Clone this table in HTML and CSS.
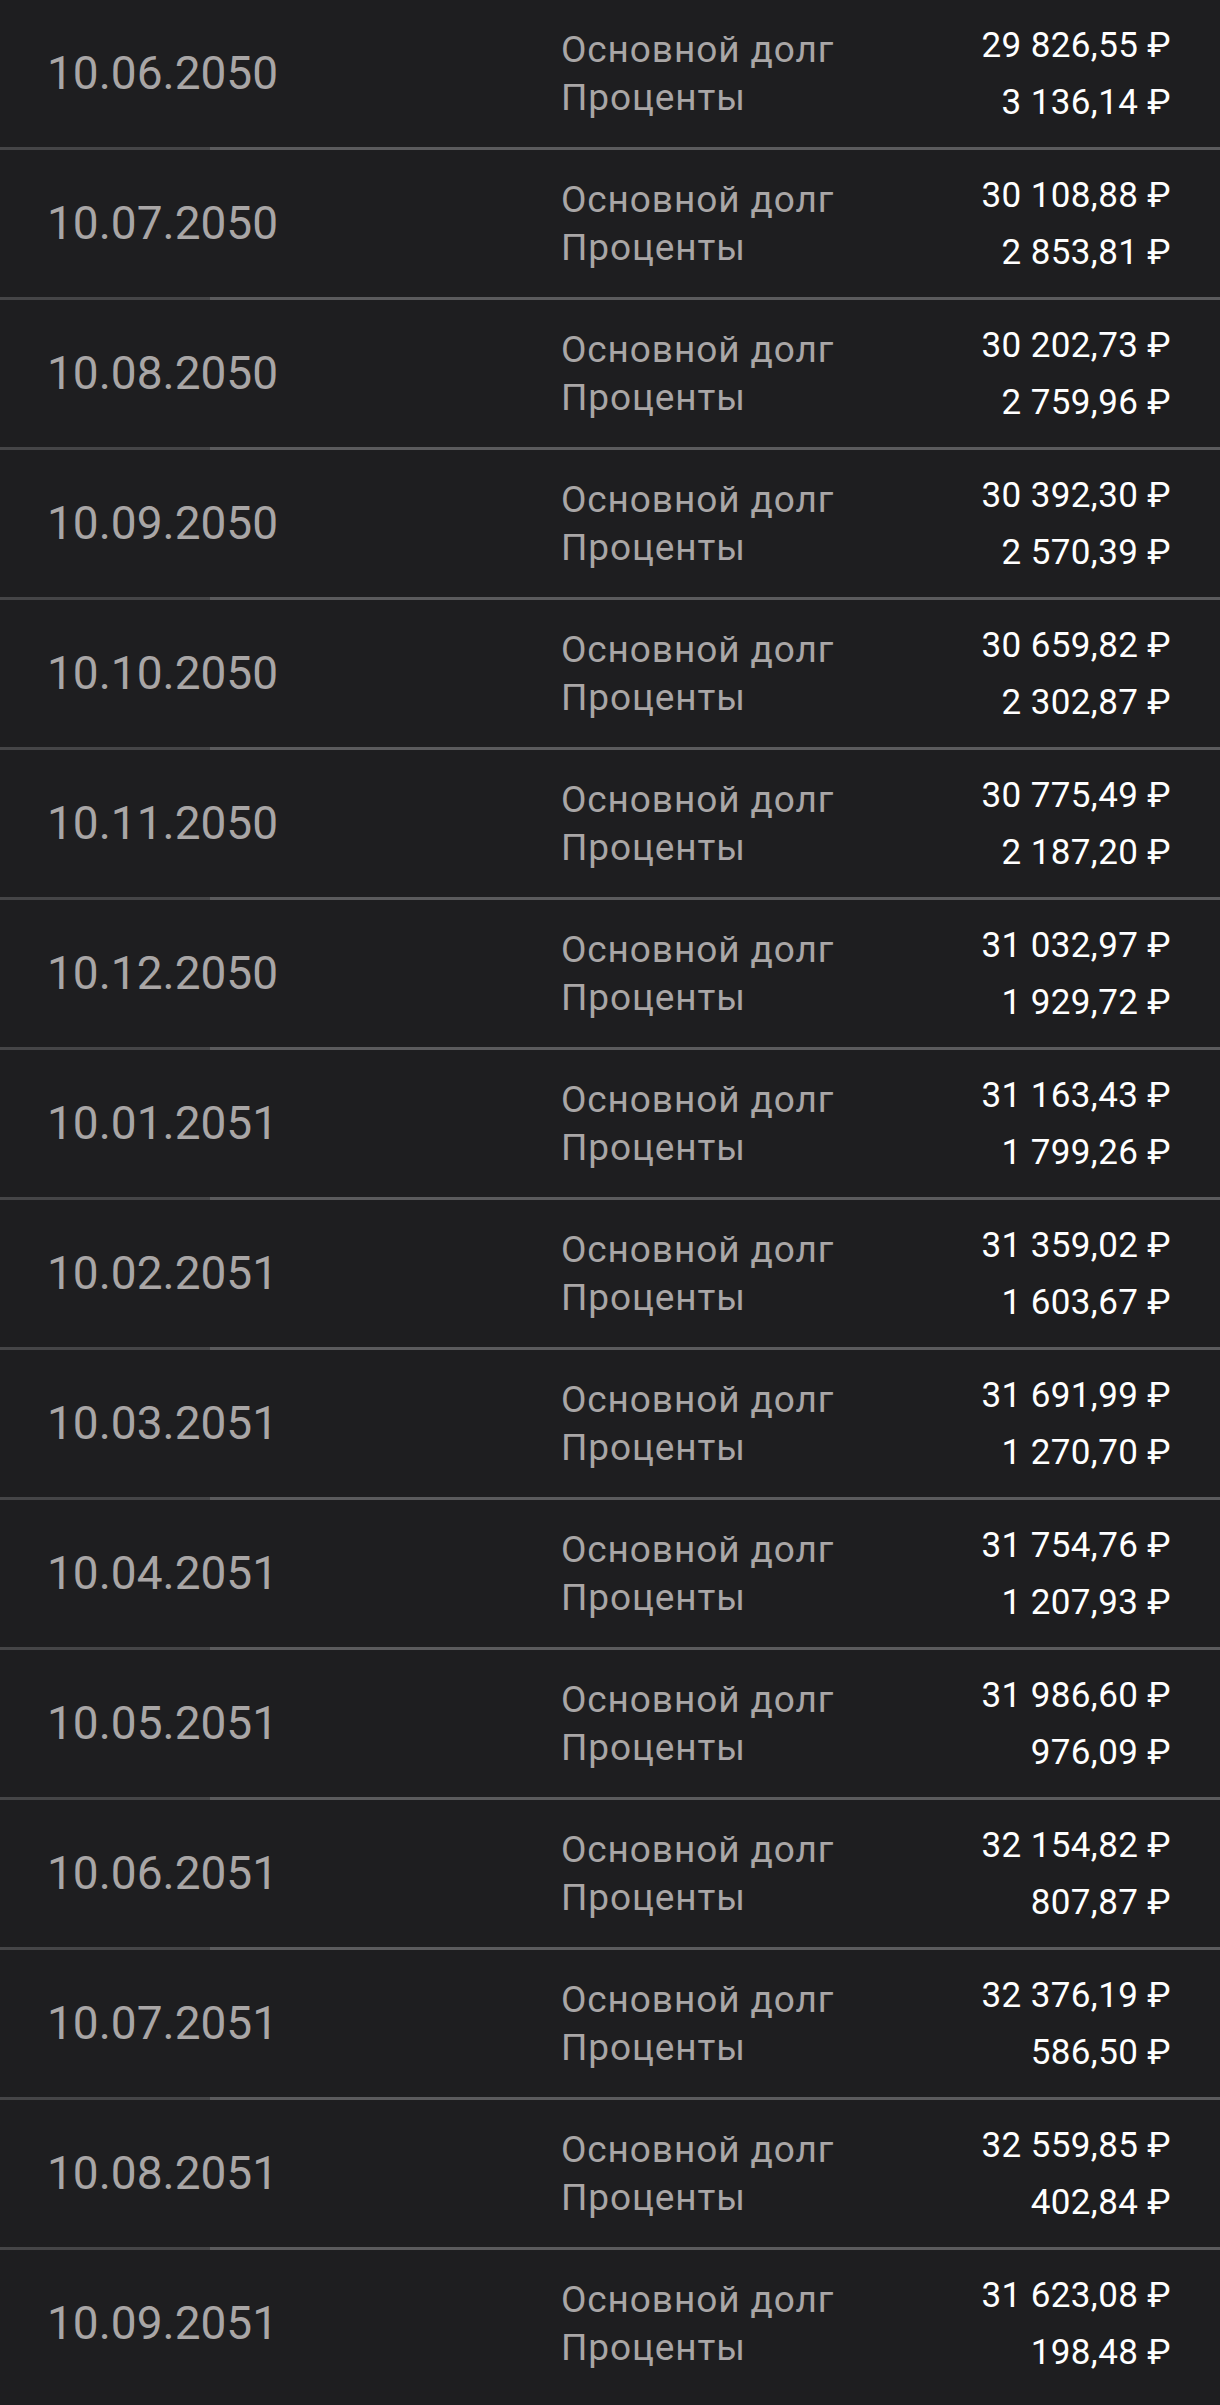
FILE: index.html
```html
<!DOCTYPE html>
<html lang="ru">
<head>
<meta charset="utf-8">
<link rel="stylesheet" href="styles.css">
</head>
<body>
<div class="list">
  <div class="row"><div class="date">10.06.2050</div><div class="labels"><span>Основной долг</span><span>Проценты</span></div><div class="amounts"><span>29&nbsp;826,55&nbsp;₽</span><span>3&nbsp;136,14&nbsp;₽</span></div></div>
  <div class="divider"><i></i><b></b></div>
  <div class="row"><div class="date">10.07.2050</div><div class="labels"><span>Основной долг</span><span>Проценты</span></div><div class="amounts"><span>30&nbsp;108,88&nbsp;₽</span><span>2&nbsp;853,81&nbsp;₽</span></div></div>
  <div class="divider"><i></i><b></b></div>
  <div class="row"><div class="date">10.08.2050</div><div class="labels"><span>Основной долг</span><span>Проценты</span></div><div class="amounts"><span>30&nbsp;202,73&nbsp;₽</span><span>2&nbsp;759,96&nbsp;₽</span></div></div>
  <div class="divider"><i></i><b></b></div>
  <div class="row"><div class="date">10.09.2050</div><div class="labels"><span>Основной долг</span><span>Проценты</span></div><div class="amounts"><span>30&nbsp;392,30&nbsp;₽</span><span>2&nbsp;570,39&nbsp;₽</span></div></div>
  <div class="divider"><i></i><b></b></div>
  <div class="row"><div class="date">10.10.2050</div><div class="labels"><span>Основной долг</span><span>Проценты</span></div><div class="amounts"><span>30&nbsp;659,82&nbsp;₽</span><span>2&nbsp;302,87&nbsp;₽</span></div></div>
  <div class="divider"><i></i><b></b></div>
  <div class="row"><div class="date">10.11.2050</div><div class="labels"><span>Основной долг</span><span>Проценты</span></div><div class="amounts"><span>30&nbsp;775,49&nbsp;₽</span><span>2&nbsp;187,20&nbsp;₽</span></div></div>
  <div class="divider"><i></i><b></b></div>
  <div class="row"><div class="date">10.12.2050</div><div class="labels"><span>Основной долг</span><span>Проценты</span></div><div class="amounts"><span>31&nbsp;032,97&nbsp;₽</span><span>1&nbsp;929,72&nbsp;₽</span></div></div>
  <div class="divider"><i></i><b></b></div>
  <div class="row"><div class="date">10.01.2051</div><div class="labels"><span>Основной долг</span><span>Проценты</span></div><div class="amounts"><span>31&nbsp;163,43&nbsp;₽</span><span>1&nbsp;799,26&nbsp;₽</span></div></div>
  <div class="divider"><i></i><b></b></div>
  <div class="row"><div class="date">10.02.2051</div><div class="labels"><span>Основной долг</span><span>Проценты</span></div><div class="amounts"><span>31&nbsp;359,02&nbsp;₽</span><span>1&nbsp;603,67&nbsp;₽</span></div></div>
  <div class="divider"><i></i><b></b></div>
  <div class="row"><div class="date">10.03.2051</div><div class="labels"><span>Основной долг</span><span>Проценты</span></div><div class="amounts"><span>31&nbsp;691,99&nbsp;₽</span><span>1&nbsp;270,70&nbsp;₽</span></div></div>
  <div class="divider"><i></i><b></b></div>
  <div class="row"><div class="date">10.04.2051</div><div class="labels"><span>Основной долг</span><span>Проценты</span></div><div class="amounts"><span>31&nbsp;754,76&nbsp;₽</span><span>1&nbsp;207,93&nbsp;₽</span></div></div>
  <div class="divider"><i></i><b></b></div>
  <div class="row"><div class="date">10.05.2051</div><div class="labels"><span>Основной долг</span><span>Проценты</span></div><div class="amounts"><span>31&nbsp;986,60&nbsp;₽</span><span>976,09&nbsp;₽</span></div></div>
  <div class="divider"><i></i><b></b></div>
  <div class="row"><div class="date">10.06.2051</div><div class="labels"><span>Основной долг</span><span>Проценты</span></div><div class="amounts"><span>32&nbsp;154,82&nbsp;₽</span><span>807,87&nbsp;₽</span></div></div>
  <div class="divider"><i></i><b></b></div>
  <div class="row"><div class="date">10.07.2051</div><div class="labels"><span>Основной долг</span><span>Проценты</span></div><div class="amounts"><span>32&nbsp;376,19&nbsp;₽</span><span>586,50&nbsp;₽</span></div></div>
  <div class="divider"><i></i><b></b></div>
  <div class="row"><div class="date">10.08.2051</div><div class="labels"><span>Основной долг</span><span>Проценты</span></div><div class="amounts"><span>32&nbsp;559,85&nbsp;₽</span><span>402,84&nbsp;₽</span></div></div>
  <div class="divider"><i></i><b></b></div>
  <div class="row"><div class="date">10.09.2051</div><div class="labels"><span>Основной долг</span><span>Проценты</span></div><div class="amounts"><span>31&nbsp;623,08&nbsp;₽</span><span>198,48&nbsp;₽</span></div></div>
</div>
</body>
</html>
```

FILE: styles.css
```css
html, body {
  margin: 0;
  padding: 0;
  background: #1e1e20;
}
body {
  font-family: Roboto, "Noto Sans", "Liberation Sans", sans-serif;
  width: 1220px;
  height: 2405px;
  overflow: hidden;
}
.list {
  display: flex;
  flex-direction: column;
}
.row {
  height: 147px;
  display: flex;
  align-items: stretch;
  box-sizing: border-box;
}
.date {
  width: 561px;
  box-sizing: border-box;
  padding-left: 47px;
  padding-top: 46px;
  font-size: 46px;
  line-height: 54px;
  color: #a9a6a6;
}
.labels {
  display: flex;
  flex-direction: column;
  padding-top: 26px;
  font-size: 37px;
  letter-spacing: 0.9px;
  line-height: 48px;
  color: #a9a6a6;
}
.amounts {
  flex: 1;
  display: flex;
  flex-direction: column;
  align-items: flex-end;
  padding-right: 49px;
  padding-top: 17px;
  font-size: 35px;
  letter-spacing: 0.4px;
  line-height: 57px;
  color: #ffffff;
}
.divider {
  height: 3px;
  display: flex;
}
.divider i {
  width: 210px;
  background: #454547;
}
.divider b {
  flex: 1;
  background: #5b5b5d;
}
```
